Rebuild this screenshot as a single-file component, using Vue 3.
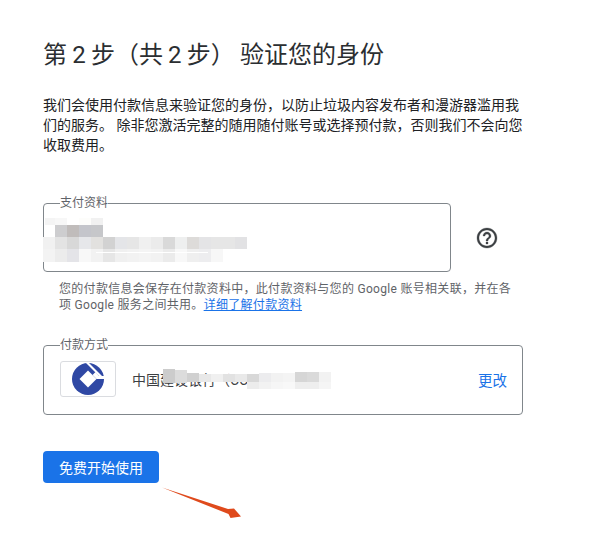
<script setup>
const hero = [
  [45, 218, 10, 7, '#f4f4f4'], [55, 218, 12, 7, '#f7f7f7'], [79, 218, 12, 7, '#fdfdfb'], [91, 218, 12, 7, '#f1f1f1'],
  [55, 225, 12, 12, '#cdcdcf'], [67, 225, 12, 12, '#c0bcbb'], [79, 225, 12, 12, '#c4c5cb'], [91, 225, 12, 12, '#c6c7ca'],
  [43, 237, 12, 12, '#f1f1f1'], [55, 237, 12, 12, '#e3e3e3'], [67, 237, 12, 12, '#d8d8d8'], [79, 237, 12, 12, '#e6e7ea'],
  [91, 237, 12, 12, '#e2e1df'], [103, 237, 12, 12, '#d2d2d2'], [115, 237, 12, 12, '#e4e5e8'], [127, 237, 12, 12, '#e6e6e6'],
  [139, 237, 12, 12, '#f0f0f0'], [151, 237, 12, 12, '#ebebeb'], [163, 237, 12, 12, '#d9d9d9'], [175, 237, 12, 12, '#eeefef'],
  [187, 237, 12, 12, '#dddbd9'], [199, 237, 12, 12, '#e4e4e6'], [211, 237, 12, 12, '#e6e6e6'], [223, 237, 12, 12, '#e6e6e6'], [235, 237, 12, 12, '#e2e2e4'],
  [43, 249, 12, 13, '#f3f3f3'], [55, 249, 12, 13, '#ececec'], [67, 249, 12, 13, '#e4e4e8'], [79, 249, 12, 13, '#f8f8f8'],
  [91, 249, 12, 13, '#f2f2f2'], [103, 249, 12, 13, '#e6e6e6'], [115, 249, 12, 13, '#f0f0f0'], [127, 249, 12, 13, '#f2f2f2'],
  [139, 249, 12, 13, '#f4f4f4'], [151, 249, 12, 13, '#f2f2f2'], [163, 249, 12, 13, '#ebebeb'], [175, 249, 12, 13, '#f8f8f8'],
  [187, 249, 12, 13, '#efefef'], [199, 249, 12, 13, '#ededef'], [211, 249, 12, 13, '#f7f7f7'],
  [96, 252, 112, 1, '#ffffff']
]
const bank = [
  [163, 369, 12, 14, '#cccccc'], [175, 370, 12, 13, '#dcdcdc'], [187, 373, 12, 9, '#d0d0d0'], [199, 374, 12, 8, '#e8e8e8'],
  [211, 374, 12, 8, '#f0f0f0'], [223, 374, 12, 8, '#e2e2e2'], [235, 374, 12, 8, '#e9e9e9'], [247, 374, 12, 8, '#d8d8d8'],
  [259, 373, 12, 9, '#ececee'], [271, 373, 12, 9, '#f2f2f2'], [283, 373, 12, 9, '#f4f4f4'], [295, 372, 12, 10, '#d6d6d6'], [307, 372, 12, 10, '#dadada'], [319, 372, 12, 10, '#f2f2f2'],
  [247, 382, 12, 7, '#ececec'], [259, 382, 12, 7, '#f2f2f2'], [271, 382, 12, 7, '#f6f6f6'], [283, 382, 12, 7, '#f8f8f8'], [295, 382, 12, 7, '#eeeeee'], [307, 382, 12, 7, '#eeeeee'], [319, 382, 12, 7, '#f5f5f5']
]
</script>

<template>
  <main class="page">
    <h1 class="title">第 2 步（共 2 步） 验证您的身份</h1>
    <p class="intro">我们会使用付款信息来验证您的身份，以防止垃圾内容发布者和漫游器滥用我们的服务。 除非您激活完整的随用随付账号或选择预付款，否则我们不会向您收取费用。</p>

    <div class="profile-row">
      <fieldset class="box profile">
        <legend>支付资料</legend>
      </fieldset>
      <svg class="help" viewBox="0 0 24 24" width="24" height="24" aria-hidden="true">
        <path fill="#3c4043" stroke="#3c4043" stroke-width="0.3" d="M11 18h2v-2h-2v2zm1-16C6.48 2 2 6.48 2 12s4.480 10 10 10 10-4.480 10-10S17.520 2 12 2zm0 18c-4.410 0-8-3.590-8-8s3.590-8 8-8 8 3.590 8 8-3.590 8-8 8zm0-14c-2.210 0-4 1.790-4 4h2c0-1.100.9-2 2-2s2 .9 2 2c0 2-3 1.750-3 5h2c0-2.250 3-2.500 3-5 0-2.210-1.790-4-4-4z"/>
      </svg>
    </div>
    <p class="note">您的付款信息会保存在付款资料中，此付款资料与您的 Google 账号相关联，并在各项 Google 服务之间共用。<a class="link">详细了解付款资料</a></p>

    <fieldset class="box method">
      <legend>付款方式</legend>
      <div class="method-row">
        <div class="logo">
          <svg viewBox="4 4 32 32" width="32" height="32" aria-hidden="true">
            <circle cx="20" cy="20" r="16" fill="#2f48a4" />
            <path fill="#fff" d="M20 11.500 28.500 20 20 28.500 11.500 20Z" />
            <path fill="#fff" d="M17 3 31 17 34 17 20 3Z" />
            <path fill="#fff" d="M24.500 16 28.500 20 38 20 38 17 31 17 27.500 13Z" />
          </svg>
        </div>
        <span class="bank">中国建设银行（CC</span>
        <a class="link change">更改</a>
      </div>
    </fieldset>

    <button class="start" type="button">免费开始使用</button>

    <svg class="overlay" width="615" height="544" viewBox="0 0 615 544" aria-hidden="true">
      <rect v-for="(r, i) in hero" :key="'h' + i" :x="r[0]" :y="r[1]" :width="r[2]" :height="r[3]" :fill="r[4]" />
      <rect v-for="(r, i) in bank" :key="'b' + i" :x="r[0]" :y="r[1]" :width="r[2]" :height="r[3]" :fill="r[4]" />
      <path fill="#df4a1c" d="M162 487.500 228 509 234 508.500 241 516.500 230.500 518 228.500 514Z" />
    </svg>
  </main>
</template>

<style>
html, body { background: #fff; }
</style>

<style scoped>
.page {
  position: relative;
  box-sizing: border-box;
  width: 615px;
  height: 544px;
  padding: 40px 0 0 43px;
  overflow: hidden;
  background: #fff;
  color: #3c4043;
  font-family: Roboto, "Noto Sans CJK SC", sans-serif;
}
.title {
  margin: 0;
  font-size: 24px;
  line-height: 30px;
  font-weight: 400;
  word-spacing: -0.75px;
  color: #2b2e31;
}
.intro {
  width: 482px;
  margin: 25px 0 0;
  font-size: 14px;
  line-height: 20px;
  color: #202124;
}
.box {
  box-sizing: border-box;
  min-width: 0;
  margin: 0;
  padding: 0 16px;
  border: 1px solid #80868b;
  border-radius: 4px;
}
.box legend {
  padding: 0;
  font-size: 12px;
  line-height: 14px;
  color: #5f6368;
}
.profile-row {
  display: flex;
  align-items: center;
  gap: 24px;
  margin-top: 41px;
}
.profile {
  width: 408px;
  height: 76px;
}
.help { margin-top: 7px; }
.note {
  width: 456px;
  margin: 9px 0 0 16px;
  font-size: 12px;
  line-height: 16px;
  letter-spacing: 0.3px;
  color: #5f6368;
}
.link { color: #1a73e8; }
.note .link { text-decoration: underline; }
.method {
  width: 480px;
  height: 77px;
  margin-top: 25px;
  padding-right: 15px;
}
.method-row {
  display: flex;
  align-items: center;
  height: 36px;
  margin-top: 9px;
}
.logo {
  box-sizing: border-box;
  display: flex;
  align-items: center;
  justify-content: center;
  width: 56px;
  height: 36px;
  border: 1px solid #dadce0;
  border-radius: 3px;
}
.bank {
  margin-left: 16px;
  font-size: 14px;
  color: #3c4043;
}
.change {
  margin-left: auto;
  font-size: 14.5px;
}
.start {
  display: block;
  width: 116px;
  height: 32px;
  margin-top: 36px;
  padding: 0;
  border: 0;
  border-radius: 4px;
  background: #1a73e8;
  color: #fff;
  font: 14px Roboto, "Noto Sans CJK SC", sans-serif;
}
.overlay {
  position: absolute;
  top: 0;
  left: 0;
  pointer-events: none;
}
</style>
